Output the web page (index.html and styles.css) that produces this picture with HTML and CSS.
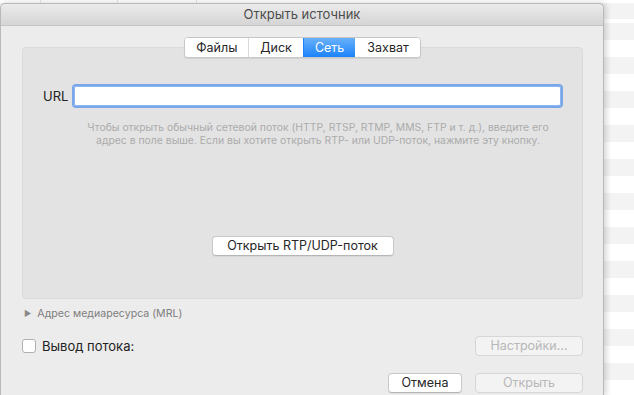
FILE: index.html
```
<!DOCTYPE html>
<html lang="ru">
<head>
    <meta charset="UTF-8">
    <meta name="viewport" content="width=device-width, initial-scale=1.0">
    <title>Открыть источник</title>
    <link rel="stylesheet" href="styles.css">
</head>
<body>
    <!-- полоска окна плейлиста за диалогом -->
    <div class="list-head">
        <span class="col c1"></span>
        <span class="col c2"></span>
        <span class="col c3"></span>
    </div>

    <div class="dialog">
        <div class="titlebar">Открыть источник</div>

        <div class="content">
            <div class="tabs">
                <button type="button" class="tab">Файлы</button>
                <button type="button" class="tab">Диск</button>
                <button type="button" class="tab active">Сеть</button>
                <button type="button" class="tab">Захват</button>
            </div>

            <div class="panel">
                <div class="url-row">
                    <label for="url">URL</label>
                    <input type="text" id="url" name="url">
                </div>
                <p class="hint">Чтобы открыть обычный сетевой поток (HTTP, RTSP, RTMP, MMS, FTP и т. д.), введите его<br>адрес в поле выше. Если вы хотите открыть RTP- или UDP-поток, нажмите эту кнопку.</p>
                <div class="center">
                    <button type="button" class="btn rtp">Открыть RTP/UDP-поток</button>
                </div>
            </div>

            <div class="mrl"><span class="tri">&#9654;</span>Адрес медиаресурса (MRL)</div>

            <div class="row">
                <label class="check"><span class="box"></span>Вывод потока:</label>
                <button type="button" class="btn wide" disabled>Настройки...</button>
            </div>

            <div class="row actions">
                <button type="button" class="btn cancel">Отмена</button>
                <button type="button" class="btn wide" disabled>Открыть</button>
            </div>
        </div>
    </div>
</body>
</html>
```

FILE: styles.css
```
body {
    margin: 0;
    font-family: Inter, "Liberation Sans", Arial, sans-serif;
    color: #222;
    height: 395px;
    overflow: hidden;
    background: repeating-linear-gradient(#f3f3f3 0 17px, #ffffff 17px 34px);
    background-position: 0 23px;
}
.list-head {
    height: 3px;
    background: #fff;
    display: flex;
}
.col {
    border-right: 1px solid #d8d8d8;
}
.c1 { width: 40px; }
.c2 { width: 76px; }
.c3 { width: 78px; }
.dialog {
    width: 602px;
    height: 392px;
    background: #ececec;
    border: 1px solid #b9b9b9;
    border-bottom: none;
    border-radius: 5px 5px 0 0;
    box-shadow: 2px 0 6px rgba(0, 0, 0, 0.18);
}
.titlebar {
    height: 21px;
    line-height: 21px;
    text-align: center;
    font-size: 13px;
    color: #4d4d4d;
    background: linear-gradient(#ebebeb, #d5d5d5);
    border-bottom: 1px solid #c4c4c4;
    border-radius: 5px 5px 0 0;
}
.content {
    padding: 11px 20px 0 21px;
}
.tabs {
    display: flex;
    width: max-content;
    margin: 0 auto -11px;
    position: relative;
    z-index: 1;
    background: #fff;
    border: 1px solid #c6c6c6;
    border-radius: 4px;
    box-shadow: 0 1px 1px rgba(0, 0, 0, 0.08);
    overflow: hidden;
}
.tab {
    font-family: inherit;
    font-size: 12.5px;
    color: #262626;
    background: #fff;
    border: none;
    border-left: 1px solid #dadada;
    height: 19px;
    padding: 0 11px;
}
.tab:first-child {
    border-left: none;
}
.tab.active {
    color: #fff;
    background: linear-gradient(#69b1fa, #1c83fb);
    border-left-color: #1c83fb;
}
.tab.active + .tab {
    border-left-color: #fff;
}
.panel {
    background: #e3e3e3;
    border: 1px solid #dadada;
    border-radius: 4px;
    padding: 38px 20px 42px 20px;
}
.url-row {
    display: flex;
    align-items: center;
    gap: 6px;
}
.url-row label {
    font-size: 13px;
    width: 25px;
    text-align: right;
}
.url-row input {
    flex: 1;
    box-sizing: border-box;
    height: 20px;
    border: 1px solid #8eb6ee;
    outline: 2px solid #78a7ea;
    border-radius: 2px;
    background: #fff;
    margin: 0 1px 0 0;
    padding: 0 3px;
}
.hint {
    margin: 15px 0 0 31px;
    font-size: 10.4px;
    line-height: 13px;
    color: #ababab;
    text-align: center;
}
.center {
    margin-top: 87px;
    text-align: center;
}
.btn {
    font-family: inherit;
    font-size: 12.5px;
    color: #262626;
    background: #fff;
    border: 1px solid #c8c8c8;
    border-bottom-color: #b5b5b5;
    border-radius: 4px;
    height: 20px;
    padding: 0 8px;
    box-shadow: 0 1px 0 rgba(0, 0, 0, 0.05);
}
.btn:disabled {
    background: #f3f3f3;
    color: #b7b7b7;
    border-color: #d6d6d6;
    box-shadow: none;
}
.rtp {
    width: 182px;
}
.wide {
    width: 108px;
}
.cancel {
    width: 74px;
}
.mrl {
    margin-top: 8px;
    height: 13px;
    line-height: 13px;
    font-size: 10.6px;
    color: #7e7e7e;
    display: flex;
    align-items: center;
}
.tri {
    font-size: 8px;
    color: #8a8a8a;
    margin: 0 6px 0 2px;
}
.row {
    display: flex;
    align-items: center;
    justify-content: space-between;
    margin-top: 16px;
    height: 20px;
}
.check {
    display: flex;
    align-items: center;
    font-size: 13px;
    color: #222;
}
.box {
    width: 12px;
    height: 12px;
    background: #fff;
    border: 1px solid #b0b0b0;
    border-radius: 3px;
    margin-right: 6px;
}
.actions {
    justify-content: flex-end;
    gap: 13px;
    margin-top: 17px;
}
```
